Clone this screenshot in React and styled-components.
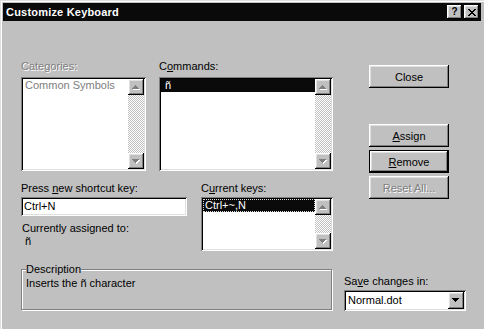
import styled, { createGlobalStyle } from 'styled-components'

const GlobalStyle = createGlobalStyle`
  html, body { margin: 0; padding: 0; }
  body {
    background: #c0c0c0;
    font-family: 'Liberation Sans', Arial, sans-serif;
    font-size: 11px;
    color: #000;
  }
`

const raised = `
  box-shadow: inset -1px -1px #000, inset 1px 1px #fff,
    inset -2px -2px #808080, inset 2px 2px #dfdfdf;
`

const sunken = `
  box-shadow: inset 1px 1px #808080, inset -1px -1px #fff,
    inset 2px 2px #000, inset -2px -2px #dfdfdf;
`

const Arrow = ({ dir = 'down', disabled }) => {
  const up = 'M3 0h1v1h-1z M2 1h3v1h-3z M1 2h5v1h-5z M0 3h7v1h-7z'
  const down = 'M0 0h7v1h-7z M1 1h5v1h-5z M2 2h3v1h-3z M3 3h1v1h-1z'
  const d = dir === 'up' ? up : down
  return (
    <svg width="8" height="5" viewBox="0 0 8 5" shapeRendering="crispEdges">
      {disabled && <path d={d} fill="#fff" transform="translate(1 1)" />}
      <path d={d} fill={disabled ? '#808080' : '#000'} />
    </svg>
  )
}

const CloseGlyph = () => (
  <svg width="8" height="7" viewBox="0 0 8 7" shapeRendering="crispEdges">
    <path
      d="M0 0h2v1h-2z M6 0h2v1h-2z M1 1h2v1h-2z M5 1h2v1h-2z M2 2h4v1h-4z M3 3h2v1h-2z M2 4h4v1h-4z M1 5h2v1h-2z M5 5h2v1h-2z M0 6h2v1h-2z M6 6h2v1h-2z"
      fill="#000"
    />
  </svg>
)

const ListBox = ({ items, height, dim, indent, focus }) => (
  <ListFrame $h={height}>
    <ListItems>
      {items.map((it, i) => (
        <Item
          key={i}
          $selected={it.selected}
          $dim={dim}
          $indent={indent}
          $focus={focus && it.selected}
        >
          {it.label}
        </Item>
      ))}
    </ListItems>
    <ScrollBar>
      <ScrollButton>
        <Arrow dir="up" disabled />
      </ScrollButton>
      <Track />
      <ScrollButton>
        <Arrow dir="down" disabled />
      </ScrollButton>
    </ScrollBar>
  </ListFrame>
)

export default function App() {
  return (
    <>
      <GlobalStyle />
      <Window>
        <TitleBar>
          <Title>Customize Keyboard</Title>
          <CaptionButtons>
            <CaptionButton>
              <HelpMark>?</HelpMark>
            </CaptionButton>
            <CaptionButton>
              <CloseGlyph />
            </CaptionButton>
          </CaptionButtons>
        </TitleBar>

        <Body>
          <MainArea>
            <TopRow>
              <Field $w={125}>
                <Label $disabled $mb={4}>Categories:</Label>
                <ListBox
                  height={94}
                  dim
                  items={[{ label: 'Common Symbols' }]}
                />
              </Field>
              <Field $w={174}>
                <Label $mb={4}>
                  C<Key>o</Key>mmands:
                </Label>
                <ListBox
                  height={94}
                  indent={4}
                  items={[{ label: 'ñ', selected: true }]}
                />
              </Field>
            </TopRow>

            <MiddleRow>
              <Field $w={166}>
                <Label $mb={2}>
                  Press <Key>n</Key>ew shortcut key:
                </Label>
                <TextBox>Ctrl+N</TextBox>
                <Note $mt={6} $pl={1}>Currently assigned to:</Note>
                <Note $pl={4}>ñ</Note>
              </Field>
              <Field $w={132}>
                <Label $mb={2}>
                  C<Key>u</Key>rrent keys:
                </Label>
                <ListBox
                  height={54}
                  focus
                  items={[{ label: 'Ctrl+~,N', selected: true }]}
                />
              </Field>
            </MiddleRow>

            <GroupBox>
              <Legend>Description</Legend>
              <GroupText>Inserts the ñ character</GroupText>
            </GroupBox>
          </MainArea>

          <SideColumn>
            <Button>Close</Button>
            <Button $mt={36}>
              <Key>A</Key>ssign
            </Button>
            <Button $mt={3} $default>
              <Key>R</Key>emove
            </Button>
            <Button $mt={3} disabled>
              Reset All...
            </Button>

            <SaveBlock>
              <Label $mb={2}>
                Sa<Key>v</Key>e changes in:
              </Label>
              <Combo>
                <ComboText>Normal.dot</ComboText>
                <ComboButton>
                  <Arrow dir="down" />
                </ComboButton>
              </Combo>
            </SaveBlock>
          </SideColumn>
        </Body>
      </Window>
    </>
  )
}

const Window = styled.div`
  width: 484px;
  height: 329px;
  box-sizing: border-box;
  overflow: hidden;
  background: #c0c0c0;
  padding: 3px 3px 0;
  box-shadow: inset 1px 1px #dfdfdf, inset 2px 2px #fff;
`

const TitleBar = styled.div`
  height: 18px;
  background: #0a0a0a;
  display: flex;
  align-items: center;
  padding: 0 2px 0 3px;
`

const Title = styled.div`
  flex: 1;
  color: #fff;
  font-weight: bold;
  font-size: 11px;
  letter-spacing: 0.2px;
  line-height: 18px;
`

const CaptionButtons = styled.div`
  display: flex;
  gap: 2px;
`

const CaptionButton = styled.div`
  width: 15px;
  height: 14px;
  background: #c0c0c0;
  ${raised}
  display: flex;
  align-items: center;
  justify-content: center;
`

const HelpMark = styled.span`
  font-weight: bold;
  font-size: 10px;
  line-height: 10px;
  color: #000;
`

const Body = styled.div`
  display: flex;
  padding: 39px 0 0 18px;
  gap: 11px;
`

const MainArea = styled.div`
  width: 312px;
  display: flex;
  flex-direction: column;
`

const TopRow = styled.div`
  display: flex;
  gap: 13px;
`

const MiddleRow = styled.div`
  display: flex;
  gap: 14px;
  margin-top: 11px;
`

const Field = styled.div`
  width: ${(p) => p.$w}px;
  display: flex;
  flex-direction: column;
`

const Label = styled.div`
  height: 13px;
  line-height: 13px;
  margin-bottom: ${(p) => p.$mb || 0}px;
  white-space: nowrap;
  color: ${(p) => (p.$disabled ? '#808080' : '#000')};
  text-shadow: ${(p) => (p.$disabled ? '1px 1px #fff' : 'none')};
`

const Key = styled.span`
  text-decoration: underline;
`

const Note = styled.div`
  height: 13px;
  line-height: 13px;
  margin-top: ${(p) => p.$mt || 0}px;
  padding-left: ${(p) => p.$pl || 0}px;
  white-space: nowrap;
`

const ListFrame = styled.div`
  height: ${(p) => p.$h}px;
  box-sizing: border-box;
  padding: 2px;
  background: #fff;
  ${sunken}
  display: flex;
`

const ListItems = styled.div`
  flex: 1;
  min-width: 0;
  background: #fff;
`

const Item = styled.div`
  height: 13px;
  line-height: 13px;
  padding-left: ${(p) => p.$indent || 2}px;
  white-space: nowrap;
  background: ${(p) => (p.$selected ? '#0a0a0a' : 'transparent')};
  color: ${(p) => (p.$selected ? '#fff' : p.$dim ? '#808080' : '#000')};
  outline: ${(p) => (p.$focus ? '1px dotted #dcdcdc' : 'none')};
  outline-offset: -1px;
`

const ScrollBar = styled.div`
  width: 16px;
  display: flex;
  flex-direction: column;
`

const ScrollButton = styled.div`
  width: 16px;
  height: 16px;
  flex: none;
  background: #c0c0c0;
  ${raised}
  display: flex;
  align-items: center;
  justify-content: center;
`

const Track = styled.div`
  flex: 1;
  background-color: #fff;
  background-image: conic-gradient(#c0c0c0 25%, #fff 0 50%, #c0c0c0 0 75%, #fff 0);
  background-size: 2px 2px;
`

const TextBox = styled.div`
  height: 19px;
  box-sizing: border-box;
  padding: 3px 3px 0;
  line-height: 13px;
  background: #fff;
  ${sunken}
`

const GroupBox = styled.fieldset`
  width: 311px;
  box-sizing: border-box;
  margin: 12px 0 0;
  padding: 1px 4px 0;
  border: 1px solid #808080;
  box-shadow: inset 1px 1px #fff, 1px 1px #fff;
`

const Legend = styled.legend`
  padding: 0;
  line-height: 13px;
  background: #c0c0c0;
`

const GroupText = styled.div`
  height: 32px;
  line-height: 13px;
`

const SideColumn = styled.div`
  width: 122px;
  display: flex;
  flex-direction: column;
  padding-top: 5px;
`

const Button = styled.button`
  width: 80px;
  height: 23px;
  margin: ${(p) => p.$mt || 0}px 0 0 25px;
  padding: 0;
  font: inherit;
  background: #c0c0c0;
  color: ${(p) => (p.disabled ? '#808080' : '#000')};
  text-shadow: ${(p) => (p.disabled ? '1px 1px #fff' : 'none')};
  border: ${(p) => (p.$default ? '1px solid #000' : 'none')};
  box-sizing: border-box;
  ${raised}
`

const SaveBlock = styled.div`
  margin-top: 76px;
  display: flex;
  flex-direction: column;
`

const Combo = styled.div`
  height: 21px;
  box-sizing: border-box;
  padding: 2px;
  background: #fff;
  ${sunken}
  display: flex;
`

const ComboText = styled.div`
  flex: 1;
  padding-left: 2px;
  line-height: 17px;
`

const ComboButton = styled.div`
  width: 16px;
  height: 17px;
  background: #c0c0c0;
  ${raised}
  display: flex;
  align-items: center;
  justify-content: center;
`
